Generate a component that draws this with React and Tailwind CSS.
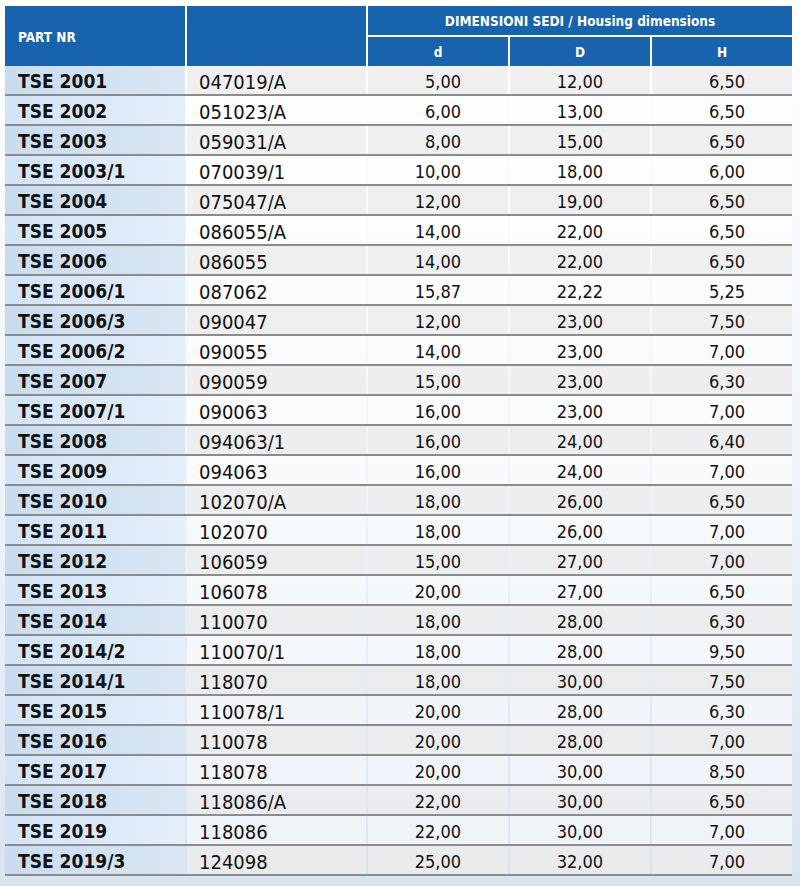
const ROWS = [
  ['TSE 2001', '047019/A', '5,00', '12,00', '6,50'],
  ['TSE 2002', '051023/A', '6,00', '13,00', '6,50'],
  ['TSE 2003', '059031/A', '8,00', '15,00', '6,50'],
  ['TSE 2003/1', '070039/1', '10,00', '18,00', '6,00'],
  ['TSE 2004', '075047/A', '12,00', '19,00', '6,50'],
  ['TSE 2005', '086055/A', '14,00', '22,00', '6,50'],
  ['TSE 2006', '086055', '14,00', '22,00', '6,50'],
  ['TSE 2006/1', '087062', '15,87', '22,22', '5,25'],
  ['TSE 2006/3', '090047', '12,00', '23,00', '7,50'],
  ['TSE 2006/2', '090055', '14,00', '23,00', '7,00'],
  ['TSE 2007', '090059', '15,00', '23,00', '6,30'],
  ['TSE 2007/1', '090063', '16,00', '23,00', '7,00'],
  ['TSE 2008', '094063/1', '16,00', '24,00', '6,40'],
  ['TSE 2009', '094063', '16,00', '24,00', '7,00'],
  ['TSE 2010', '102070/A', '18,00', '26,00', '6,50'],
  ['TSE 2011', '102070', '18,00', '26,00', '7,00'],
  ['TSE 2012', '106059', '15,00', '27,00', '7,00'],
  ['TSE 2013', '106078', '20,00', '27,00', '6,50'],
  ['TSE 2014', '110070', '18,00', '28,00', '6,30'],
  ['TSE 2014/2', '110070/1', '18,00', '28,00', '9,50'],
  ['TSE 2014/1', '118070', '18,00', '30,00', '7,50'],
  ['TSE 2015', '110078/1', '20,00', '28,00', '6,30'],
  ['TSE 2016', '110078', '20,00', '28,00', '7,00'],
  ['TSE 2017', '118078', '20,00', '30,00', '8,50'],
  ['TSE 2018', '118086/A', '22,00', '30,00', '6,50'],
  ['TSE 2019', '118086', '22,00', '30,00', '7,00'],
  ['TSE 2019/3', '124098', '25,00', '32,00', '7,00'],
];

const COLS = 'grid grid-cols-[180px_179px_140px_140px_140px] gap-x-[2px]';

export default function App() {
  return (
    <div
      className="min-h-[886px] w-[800px] bg-gradient-to-b from-white via-[#f1f5fa] to-[#d9e4f1] pt-[6px] pl-[5px] text-[#111]"
      style={{ fontFamily: '"DejaVu Sans Condensed", "DejaVu Sans", sans-serif' }}
    >
      {/* Header */}
      <div className={`${COLS} h-[60px] text-white font-bold text-[13.5px]`}>
        <div className="bg-[#1863ae] flex items-center pl-[13px] pt-[2px]">PART NR</div>
        <div className="bg-[#1863ae]" />
        <div className="col-span-3 flex flex-col gap-y-[2px]">
          <div className="h-[29px] bg-[#1863ae] flex items-center justify-center pt-[1px]">
            DIMENSIONI SEDI / Housing dimensions
          </div>
          <div className="grid grid-cols-[140px_140px_140px] gap-x-[2px] h-[29px]">
            <div className="bg-[#1863ae] flex items-center justify-center pt-[1px]">d</div>
            <div className="bg-[#1863ae] flex items-center justify-center pt-[1px]">D</div>
            <div className="bg-[#1863ae] flex items-center justify-center pt-[1px]">H</div>
          </div>
        </div>
      </div>

      {/* Body */}
      <div className="w-[787px]">
        {ROWS.map((r, i) => {
          const odd = i % 2 === 0;
          return (
            <div
              key={r[0]}
              className={`${COLS} h-[30px] border-b-2 border-[#8c8c8c] leading-none`}
            >
              <div
                className={`flex items-center pl-[13px] pt-[3px] font-bold text-[19px] bg-gradient-to-r ${
                  odd ? 'from-[#c9dcef] to-[#dae7f3]' : 'from-[#d2e4f7] to-[#e3eefa]'
                }`}
              >
                {r[0]}
              </div>
              <div
                className={`flex items-center pl-[12px] pt-[3px] text-[20px] ${
                  odd ? 'bg-[#ececec]/80' : 'bg-white/55'
                }`}
              >
                {r[1]}
              </div>
              {r.slice(2).map((v, j) => (
                <div
                  key={j}
                  className={`flex items-center justify-end pr-[47px] pt-[3px] text-[18px] font-light ${
                    odd ? 'bg-[#ececec]/80' : 'bg-white/55'
                  }`}
                >
                  {v}
                </div>
              ))}
            </div>
          );
        })}
      </div>
    </div>
  );
}
